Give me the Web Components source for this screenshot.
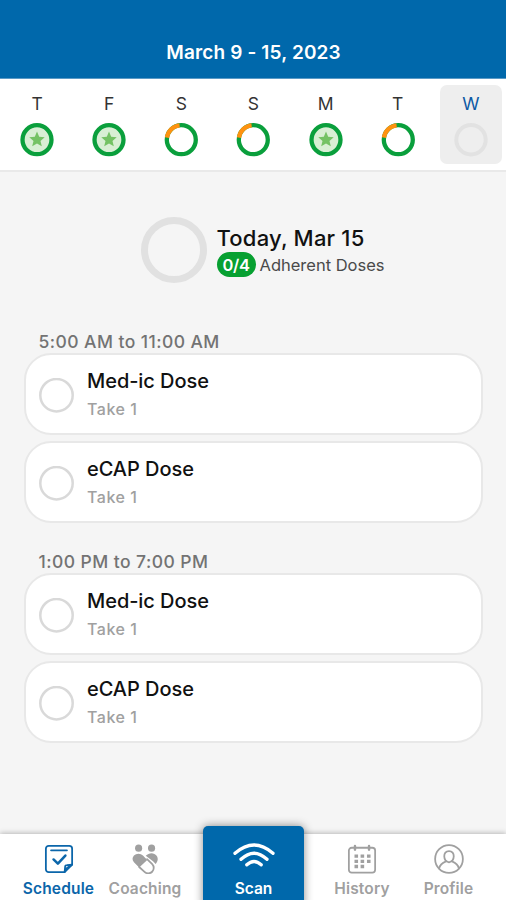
<!DOCTYPE html>
<html lang="en">
<head>
<meta charset="utf-8">
<title>Schedule</title>
<style>
  html, body {
    height: 100%;
    margin: 0;
  }
  body {
    font-family: Inter, Roboto, sans-serif;
    background: #f5f5f5;
  }
</style>
</head>
<body>
<schedule-app>
  <week-header slot="header">March 9 - 15, 2023</week-header>
  <week-strip slot="header">
    <week-day status="full">T</week-day>
    <week-day status="full">F</week-day>
    <week-day status="partial">S</week-day>
    <week-day status="partial">S</week-day>
    <week-day status="full">M</week-day>
    <week-day status="partial">T</week-day>
    <week-day status="empty" selected>W</week-day>
  </week-strip>

  <day-summary>
    <span slot="title">Today, Mar 15</span>
    <span slot="count">0/4</span>
    <span slot="label">Adherent Doses</span>
  </day-summary>
  <dose-group>
    <span slot="title">5:00 AM to 11:00 AM</span>
    <dose-card>Med-ic Dose<span slot="amount">Take 1</span></dose-card>
    <dose-card>eCAP Dose<span slot="amount">Take 1</span></dose-card>
  </dose-group>
  <dose-group>
    <span slot="title">1:00 PM to 7:00 PM</span>
    <dose-card>Med-ic Dose<span slot="amount">Take 1</span></dose-card>
    <dose-card>eCAP Dose<span slot="amount">Take 1</span></dose-card>
  </dose-group>

  <tab-bar slot="footer">
    <tab-item icon="schedule" active>Schedule</tab-item>
    <tab-item icon="coaching">Coaching</tab-item>
    <tab-item icon="scan" primary>Scan</tab-item>
    <tab-item icon="history">History</tab-item>
    <tab-item icon="profile">Profile</tab-item>
  </tab-bar>
</schedule-app>

<script>
// attach an open shadow root and fill it
class BaseElement extends HTMLElement {
  constructor() {
    super();
    const template = document.createElement("template");
    template.innerHTML = this.render();
    this.attachShadow({ mode: "open" });
    this.shadowRoot.appendChild(template.content.cloneNode(true));
  }
  render() {
    return "<slot></slot>";
  }
}

class ScheduleApp extends BaseElement {
  render() {
    return `
      <style>
        :host {
          display: flex;
          flex-direction: column;
          height: 100vh;
          overflow: hidden;
        }
        main {
          flex: 1;
          min-height: 0;
          padding: 45px 23px 0 24px;
        }
      </style>
      <slot name="header"></slot>
      <main><slot></slot></main>
      <slot name="footer"></slot>
    `;
  }
}

class WeekHeader extends BaseElement {
  render() {
    return `
      <style>
        :host {
          display: flex;
          justify-content: center;
          box-sizing: border-box;
          height: 79px;
          padding: 40px 0 0 1px;
          background: #0068ab;
          border-bottom: 1px solid #5a9ac6;
          color: #fff;
          font-size: 19px;
          font-weight: 600;
          letter-spacing: .15px;
          line-height: 26px;
        }
      </style>
      <slot></slot>
    `;
  }
}

class WeekStrip extends BaseElement {
  render() {
    return `
      <style>
        :host {
          display: grid;
          grid-template-columns: repeat(7, 1fr);
          box-sizing: border-box;
          height: 93px;
          padding: 6px 0 0 1px;
          background: #fff;
          border-bottom: 2px solid #e9e9e9;
        }
      </style>
      <slot></slot>
    `;
  }
}

class WeekDay extends BaseElement {
  render() {
    return `
      <style>
        :host {
          display: flex;
          flex-direction: column;
          align-items: center;
          justify-self: center;
          box-sizing: border-box;
          width: 62px;
          height: 79px;
          padding-top: 8px;
          border-radius: 7px;
          color: #333;
          font-size: 17.5px;
          line-height: 22px;
        }
        :host([selected]) {
          margin-left: 2px;
          background: #eeeeee;
          color: #0c59a4;
        }
        svg {
          width: 34px;
          height: 34px;
          margin-top: 7.5px;
        }
      </style>
      <slot></slot>
      <svg viewBox="0 0 34 34" fill="none">${this.ring()}</svg>
    `;
  }
  ring() {
    switch (this.getAttribute("status")) {
      case "full":
        return `
          <circle cx="17" cy="16.700" r="14.500" fill="#d8efd4" stroke="#0a9f3c" stroke-width="4.300"/>
          <path fill="#74c264" d="M17 8.600l2.200 5.100 5.500.500-4.200 3.700 1.300 5.400-4.800-2.900-4.800 2.900 1.300-5.400-4.200-3.700 5.500-.500z"/>`;
      case "partial":
        return `
          <circle cx="17.300" cy="16.700" r="14.500" stroke="#0a9f3c" stroke-width="4.300"/>
          <path d="M2.950 14.600A14.500 14.500 0 0 1 15.600 2.300" stroke="#ff9210" stroke-width="4.300"/>`;
      default:
        return `<circle cx="17" cy="16.700" r="14.700" stroke="#e2e2e2" stroke-width="4"/>`;
    }
  }
}

class DaySummary extends BaseElement {
  render() {
    return `
      <style>
        :host {
          display: flex;
          gap: 10px;
          height: 66px;
          padding-left: 116.5px;
        }
        .ring {
          box-sizing: border-box;
          width: 66px;
          height: 66px;
          border: 7px solid #e1e1e1;
          border-radius: 50%;
        }
        .title {
          padding-top: 8px;
          color: #111;
          font-size: 22px;
          font-weight: 500;
          letter-spacing: .2px;
          line-height: 26px;
        }
        .row {
          display: flex;
          align-items: center;
          gap: 4px;
          margin-top: 1px;
          color: #4a4a4a;
          font-size: 16.5px;
        }
        .pill {
          box-sizing: border-box;
          width: 39px;
          height: 25px;
          border-radius: 12.5px;
          background: #07a031;
          color: #fff;
          font-size: 16.5px;
          font-weight: 600;
          letter-spacing: -.3px;
          line-height: 26px;
          text-align: center;
        }
      </style>
      <div class="ring"></div>
      <div>
        <div class="title"><slot name="title"></slot></div>
        <div class="row">
          <span class="pill"><slot name="count"></slot></span>
          <slot name="label"></slot>
        </div>
      </div>
    `;
  }
}

class DoseGroup extends BaseElement {
  render() {
    return `
      <style>
        :host {
          display: flex;
          flex-direction: column;
          gap: 6px;
          margin-top: 49px;
        }
        :host(:nth-of-type(n + 2)) {
          margin-top: 29px;
        }
        .title {
          height: 21px;
          margin-bottom: -6px;
          padding-left: 14.5px;
          color: #737373;
          font-size: 17.5px;
          line-height: 20px;
          font-weight: 500;
          letter-spacing: .44px;
        }
      </style>
      <div class="title"><slot name="title"></slot></div>
      <slot></slot>
    `;
  }
}

class DoseCard extends BaseElement {
  render() {
    return `
      <style>
        :host {
          display: flex;
          align-items: center;
          gap: 13px;
          box-sizing: border-box;
          height: 82px;
          padding-left: 13px;
          border: 2px solid #e8e8e8;
          border-radius: 27px;
          background: #fff;
          color: #111;
          font-size: 20px;
          font-weight: 500;
          letter-spacing: -.06px;
          line-height: 26px;
        }
        .check {
          width: 35px;
          height: 35px;
          margin-top: 2px;
          fill: none;
          stroke: #d9d9d9;
          stroke-width: 2.5;
        }
        .text {
          padding-top: 1px;
        }
        .amount {
          margin-top: 3px;
          color: #a0a0a0;
          font-size: 16px;
          letter-spacing: .55px;
          line-height: 24px;
        }
      </style>
      <svg class="check" viewBox="0 0 35 35"><circle cx="17.500" cy="17.200" r="16.200"/></svg>
      <div class="text">
        <slot></slot>
        <div class="amount"><slot name="amount"></slot></div>
      </div>
    `;
  }
}

class TabBar extends BaseElement {
  render() {
    return `
      <style>
        :host {
          display: grid;
          grid-template-columns: 87px 86px 1fr 86px 87px;
          height: 66px;
          padding: 0 14px 0 15px;
          background: #fff;
          box-shadow: 0 -1px 5px rgba(0, 0, 0, .25);
        }
      </style>
      <slot></slot>
    `;
  }
}

const icons = {
  schedule: `
    <path d="M22 30H5a3 3 0 0 1-3-3V5a3 3 0 0 1 3-3h22a3 3 0 0 1 3 3v17z"/>
    <path d="M30 22l-5.500.500a2 2 0 0 0-2 2L22 30l2.500-4.500zM7.500 6.700h17"/>
    <path d="M10.200 16.500l4.600 4.500 8-8.700" stroke-width="2.700"/>`,
  coaching: `
    <g fill="currentColor" stroke="none">
      <circle cx="9.200" cy="4.400" r="3.800"/>
      <circle cx="23" cy="4.400" r="3.800"/>
      <path d="M4.200 12.300a6.800 6.800 0 0 1 9.600 0l4.600 4.700-8.600 8-5.600-5.600a5.500 5.500 0 0 1 0-7.100z"/>
      <path d="M16.800 12.600c3.500-3.800 9-3.700 11.600-.100 2.100 3 1.200 6.300-1 8.800-.800-.400-1.700-1.800-2.500-2.600z"/>
    </g>
    <path d="M9.800 24.500l5.700 5.200a5.800 5.800 0 0 0 8.200-8.200l-5.500-5.400"/>`,
  scan: `
    <g stroke-width="3.300">
      <path d="M2 12.300Q21-4.300 40 12.300"/>
      <path d="M8 18.300Q21 6 34 18.300"/>
      <path d="M13.800 23.800Q21 17.200 28.200 23.800"/>
    </g>`,
  history: `
    <rect x="2" y="4" width="28" height="26.500" rx="3"/>
    <path d="M8.500 2v4M23.500 2v4" stroke-width="2.600"/>
    <path d="M8 13h3.800M14.500 13h3.800M21.300 13h3.800M8 18.500h3.800M14.500 18.500h3.800M21.300 18.500h3.800M8 24h3.800M14.500 24h3.800" stroke-width="3.500" stroke-linecap="butt"/>`,
  profile: `
    <circle cx="16" cy="16" r="14.800"/>
    <path d="M16 7.500c7 0 6.500 11 0 12-6.500-1-7-12 0-12z"/>
    <path d="M5.500 26c.800-4.500 3.500-6 7.300-7.500M26.500 26c-.800-4.500-3.500-6-7.300-7.500"/>`
};

class TabItem extends BaseElement {
  render() {
    const box = this.hasAttribute("primary") ? "0 0 42 27" : "0 0 32 32";
    return `
      <style>
        :host {
          display: flex;
          flex-direction: column;
          align-items: center;
          color: #a0a0a0;
          font-size: 15.5px;
          font-weight: 600;
          letter-spacing: .15px;
          line-height: 20px;
        }
        :host([active]) {
          color: #0b66aa;
        }
        :host([primary]) {
          justify-self: center;
          width: 101px;
          height: 82px;
          margin-top: -8px;
          border-radius: 5px 5px 0 0;
          background: #0068ab;
          box-shadow: 0 0 10px rgba(0, 0, 0, .45);
          color: #fff;
          letter-spacing: 0;
        }
        svg {
          width: 30px;
          height: 30px;
          margin: 10px 0 5px;
          fill: none;
          stroke: currentColor;
          stroke-width: 1.9;
          stroke-linecap: round;
          stroke-linejoin: round;
        }
        :host([primary]) svg {
          width: 42px;
          height: 27px;
          margin: 15px 0 11px;
        }
      </style>
      <svg viewBox="${box}">${icons[this.getAttribute("icon")]}</svg>
      <slot></slot>
    `;
  }
}

window.customElements.define("schedule-app", ScheduleApp);
window.customElements.define("week-header", WeekHeader);
window.customElements.define("week-strip", WeekStrip);
window.customElements.define("week-day", WeekDay);
window.customElements.define("day-summary", DaySummary);
window.customElements.define("dose-group", DoseGroup);
window.customElements.define("dose-card", DoseCard);
window.customElements.define("tab-bar", TabBar);
window.customElements.define("tab-item", TabItem);
</script>
</body>
</html>
